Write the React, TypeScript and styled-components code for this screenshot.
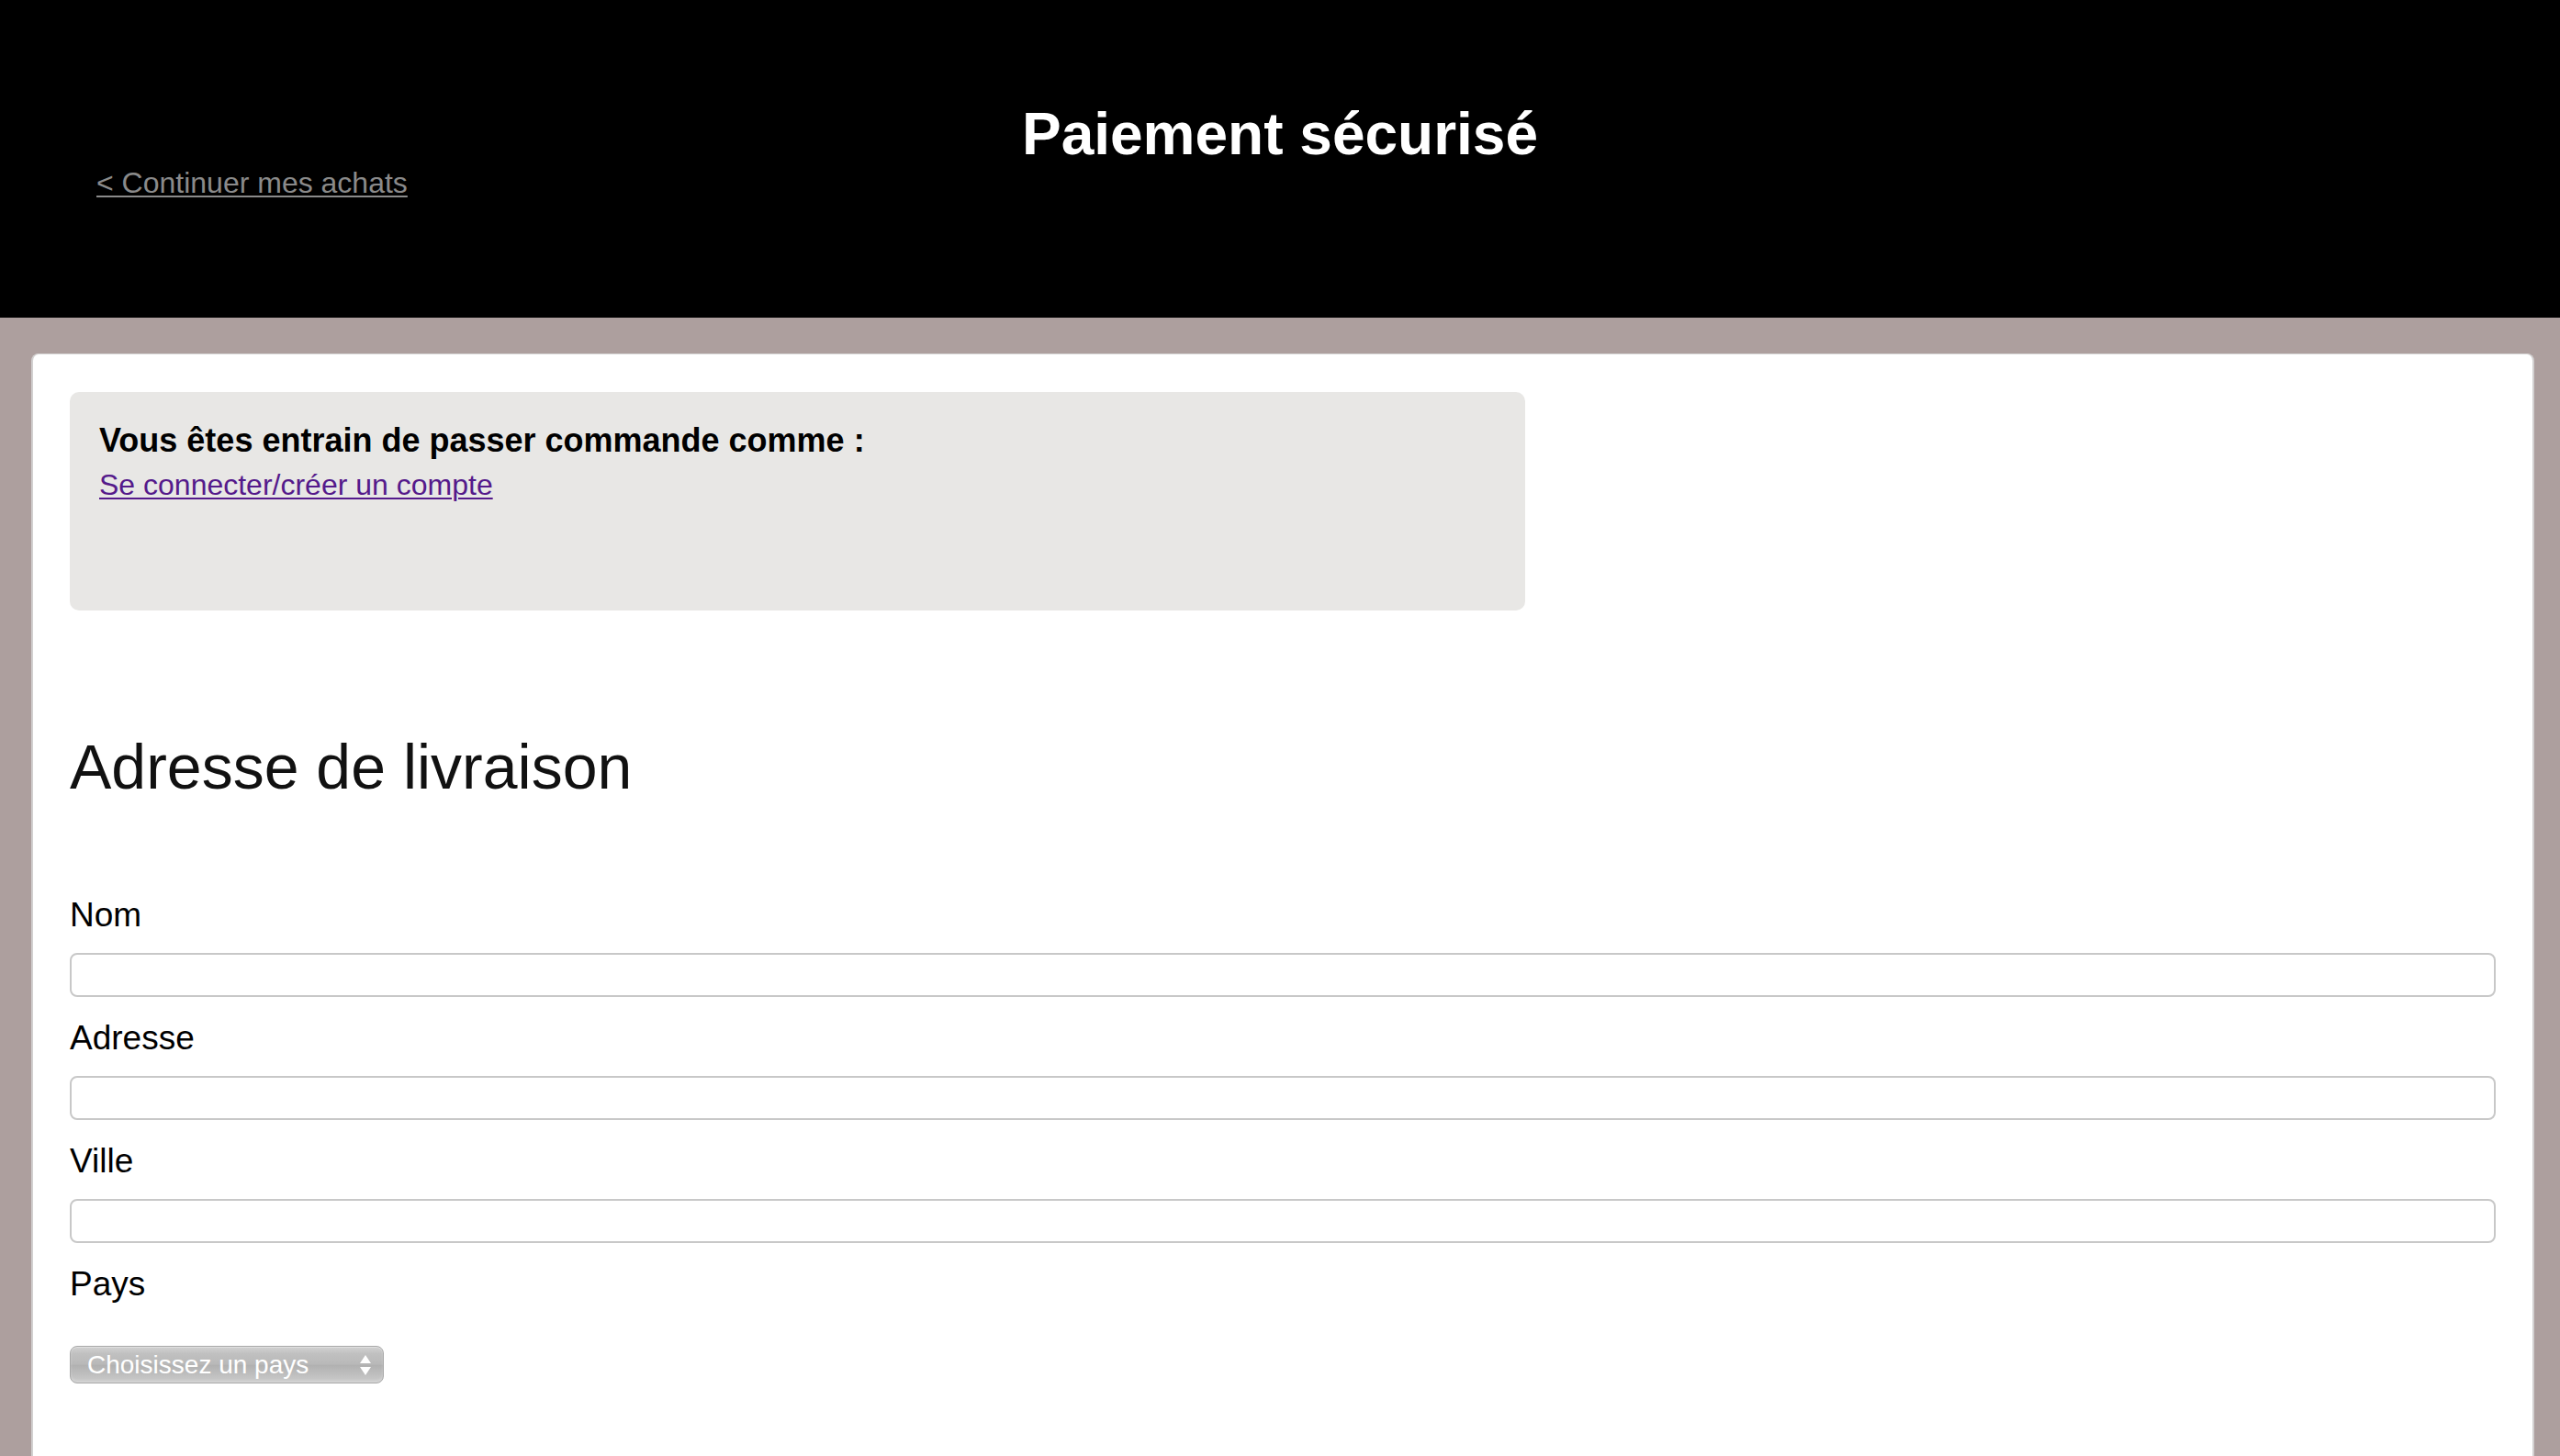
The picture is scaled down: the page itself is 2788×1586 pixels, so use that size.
import React from "react";
import styled, { createGlobalStyle } from "styled-components";

const GlobalStyle = createGlobalStyle`
  html, body {
    margin: 0;
    padding: 0;
    background: #ad9f9e;
    font-family: "Liberation Sans", Arial, Helvetica, sans-serif;
  }
  #root { min-height: 1586px; }
  * { box-sizing: border-box; }
`;

const Header = styled.header`
  display: grid;
  height: 346px;
  padding-top: 109px;
  background: #000;
`;

const Title = styled.h1`
  grid-area: 1 / 1;
  justify-self: center;
  margin: 0;
  font-size: 64px;
  line-height: 74px;
  font-weight: 700;
  color: #fff;
`;

const BackLink = styled.a`
  grid-area: 1 / 1;
  justify-self: start;
  align-self: start;
  margin: 72px 0 0 105px;
  font-size: 32px;
  line-height: 37px;
  color: #8a8a8a;
  text-decoration: underline;
  text-decoration-thickness: 2px;
  text-underline-offset: 3px;
  cursor: pointer;
`;

const Card = styled.main`
  height: 1201px;
  margin: 39px 28px 0 34px;
  padding: 41px 40px 0 40px;
  background: #fff;
  border: 2px solid #d2d0d0;
  border-top-width: 1px;
  border-bottom: none;
  border-radius: 8px 8px 0 0;
`;

const AccountBox = styled.section`
  width: 1585px;
  height: 238px;
  padding: 30px 32px;
  background: #e8e7e5;
  border-radius: 10px;
  color: #000;
`;

const AccountTitle = styled.div`
  font-size: 36px;
  line-height: 45px;
  font-weight: 700;
`;

const AccountLink = styled.a`
  display: inline-block;
  margin-top: 4px;
  font-size: 32px;
  line-height: 45px;
  color: #551a8b;
  text-decoration: underline;
  text-decoration-thickness: 2px;
  text-underline-offset: 3px;
  cursor: pointer;
`;

const SectionTitle = styled.h2`
  margin: 131px 0 100px 0;
  font-size: 68px;
  line-height: 78px;
  font-weight: 300;
  color: #111;
`;

const Form = styled.form`
  display: flex;
  flex-direction: column;
`;

const Label = styled.label<{ $gap?: number }>`
  display: block;
  font-size: 37px;
  line-height: 46px;
  color: #000;
  margin-bottom: ${(p) => p.$gap ?? 18}px;
`;

const TextInput = styled.input`
  display: block;
  width: 100%;
  height: 48px;
  margin: 0 0 22px 0;
  padding: 0 12px;
  border: 2px solid #c8c8c8;
  border-radius: 8px;
  background: #fff;
  font-family: inherit;
  font-size: 28px;
  outline: none;
`;

const SelectWrap = styled.div`
  position: relative;
  width: 342px;
  height: 41px;
`;

const Select = styled.select`
  appearance: none;
  -webkit-appearance: none;
  width: 100%;
  height: 100%;
  padding: 0 40px 0 18px;
  border: 1px solid #a8a8a8;
  border-radius: 8px;
  background: linear-gradient(
    to bottom,
    #d2d2d2 0%,
    #c0c0c0 20%,
    #b9b9b9 48%,
    #b1b1b1 52%,
    #bfbfbf 78%,
    #cbcbcb 100%
  );
  box-shadow: inset 0 1px 0 rgba(255, 255, 255, 0.35),
    inset 0 -2px 3px rgba(255, 255, 255, 0.25);
  color: #fff;
  font-family: inherit;
  font-size: 28px;
  line-height: 39px;
  outline: none;
`;

const Arrows = styled.svg`
  position: absolute;
  right: 14px;
  top: 10px;
  width: 12px;
  height: 22px;
  pointer-events: none;
`;

export default function App() {
  return (
    <>
      <GlobalStyle />
      <Header>
        <Title>Paiement sécurisé</Title>
        <BackLink href="#">&lt; Continuer mes achats</BackLink>
      </Header>
      <Card>
        <AccountBox>
          <AccountTitle>Vous êtes entrain de passer commande comme :</AccountTitle>
          <AccountLink href="#">Se connecter/créer un compte</AccountLink>
        </AccountBox>
        <SectionTitle>Adresse de livraison</SectionTitle>
        <Form onSubmit={(e) => e.preventDefault()}>
          <Label htmlFor="nom">Nom</Label>
          <TextInput id="nom" type="text" />
          <Label htmlFor="adresse">Adresse</Label>
          <TextInput id="adresse" type="text" />
          <Label htmlFor="ville">Ville</Label>
          <TextInput id="ville" type="text" />
          <Label htmlFor="pays" $gap={44}>
            Pays
          </Label>
          <SelectWrap>
            <Select id="pays" defaultValue="">
              <option value="">Choisissez un pays</option>
              <option value="fr">France</option>
              <option value="be">Belgique</option>
              <option value="ch">Suisse</option>
            </Select>
            <Arrows viewBox="0 0 12 22">
              <path d="M6 0 L12 9 L0 9 Z" fill="#fff" />
              <path d="M0 13 L12 13 L6 22 Z" fill="#fff" />
            </Arrows>
          </SelectWrap>
        </Form>
      </Card>
    </>
  );
}
